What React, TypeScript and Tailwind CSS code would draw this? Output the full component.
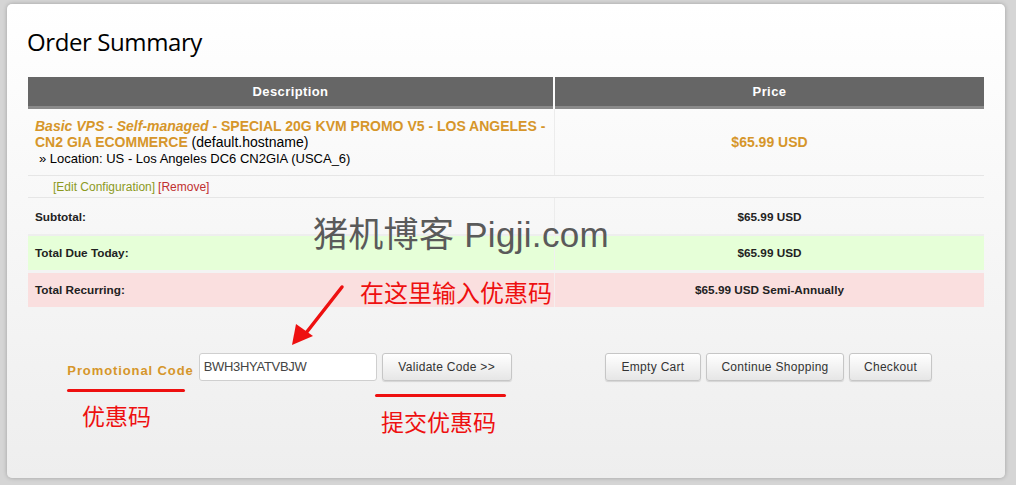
import React from "react";

const sans = { fontFamily: '"Liberation Sans", Arial, sans-serif' };
const cjk = { fontFamily: '"Noto Sans CJK SC", "Liberation Sans", sans-serif' };
const mark = { fontFamily: '"Liberation Sans", "Noto Sans CJK SC", sans-serif' };

function Btn({ label, w }: { label: string; w: string }) {
  return (
    <button
      className={`h-[28px] ${w} rounded-[3px] border border-[#c6c6c6] bg-gradient-to-b from-white to-[#e6e6e6] text-[12px] text-[#333] tracking-[0.3px] shadow-[0_1px_1px_rgba(0,0,0,0.12)]`}
      style={sans}
    >
      {label}
    </button>
  );
}

export default function App() {
  return (
    <div className="w-[1016px] h-[485px] bg-[#d5d5d5] pt-[4px] pl-[7px] overflow-hidden" style={sans}>
      <div className="relative w-[998px] h-[474px] rounded-[5px] bg-gradient-to-b from-white to-[#eeeeee] shadow-[0_0_4px_rgba(0,0,0,0.25)] px-[21px] pt-[20px]">
        <h1
          className="text-[24px] leading-[36px] text-black ml-[-1px] tracking-[-0.4px]"
          style={{ fontFamily: '"Open Sans", "Noto Sans", sans-serif' }}
        >
          Order Summary
        </h1>

        <div className="mt-[17px] w-[956px]">
          {/* header */}
          <div className="flex gap-[2px] text-[13px] font-bold text-white">
            <div className="w-[525px] h-[32px] bg-[#666] border-b-[3px] border-[#8a8a8a] flex items-center justify-center tracking-[0.4px]">
              Description
            </div>
            <div className="flex-1 h-[32px] bg-[#666] border-b-[3px] border-[#8a8a8a] flex items-center justify-center tracking-[0.4px]">
              Price
            </div>
          </div>

          {/* product */}
          <div className="flex border-b border-[#e6e6e6]">
            <div className="w-[527px] h-[66px] pl-[7px] pt-[10px] text-[14px] leading-[15.5px] text-black border-r border-[#ececec]">
              <div className="text-[#d6962a] font-bold">
                <i>Basic VPS - Self-managed</i> - SPECIAL 20G KVM PROMO V5 - LOS ANGELES -
              </div>
              <div>
                <span className="text-[#d6962a] font-bold">CN2 GIA ECOMMERCE</span> (default.hostname)
              </div>
              <div className="pl-[4px] pt-[1px] text-[13px]">» Location: US - Los Angeles DC6 CN2GIA (USCA_6)</div>
            </div>
            <div className="flex-1 flex items-center justify-center text-[14px] font-bold text-[#d6962a]">
              $65.99 USD
            </div>
          </div>

          {/* edit */}
          <div className="h-[22px] pl-[25px] flex items-center text-[12px] border-b border-[#e6e6e6]">
            <span className="text-[#8c9a1e]">[Edit Configuration]</span>
            <span className="text-[#c03030] ml-[3px]">[Remove]</span>
          </div>

          {/* totals */}
          <div className="flex h-[38px] border-b-2 border-[#eeeeee] text-[11.75px] font-bold text-[#222]">
            <div className="w-[527px] pl-[7px] pt-[1px] flex items-center border-r border-[#ececec]">Subtotal:</div>
            <div className="flex-1 pt-[1px] flex items-center justify-center">$65.99 USD</div>
          </div>
          <div className="flex h-[37px] bg-[#e6ffd8] border-b-[3px] border-[#f3f3f3] text-[11.75px] font-bold text-[#222]">
            <div className="w-[527px] pl-[7px] flex items-center border-r border-[#f0f0f0]">Total Due Today:</div>
            <div className="flex-1 flex items-center justify-center">$65.99 USD</div>
          </div>
          <div className="flex h-[34px] bg-[#fadfdf] text-[11.75px] font-bold text-[#222]">
            <div className="w-[527px] pl-[7px] flex items-center border-r border-[#f6eeee]">Total Recurring:</div>
            <div className="flex-1 flex items-center justify-center">$65.99 USD Semi-Annually</div>
          </div>
        </div>

        {/* promo + actions */}
        <div className="mt-[46px] w-[956px] flex">
          <div className="w-[525px] flex items-center justify-center gap-[5px] pr-[2px]">
            <span className="text-[13px] font-bold text-[#d6962a] tracking-[0.9px] mt-[8px]">Promotional Code</span>
            <div className="w-[178px] h-[28px] bg-white border border-[#cfcfcf] rounded-[3px] flex items-center pl-[4px] text-[13px] text-[#444] tracking-[-0.3px]">
              BWH3HYATVBJW
            </div>
            <Btn label="Validate Code >>" w="w-[130px]" />
          </div>
          <div className="flex-1 flex items-center justify-center gap-[5px]">
            <Btn label="Empty Cart" w="w-[96px]" />
            <Btn label="Continue Shopping" w="w-[138px]" />
            <Btn label="Checkout" w="w-[83px]" />
          </div>
        </div>

        {/* annotations */}
        <div
          className="absolute left-[306px] top-[209px] text-[35px] leading-[44px] tracking-[0.3px] text-[#5a5a5a] whitespace-nowrap"
          style={mark}
        >
          猪机博客 Pigji.com
        </div>
        <div className="absolute left-[353px] top-[272px] text-[24px] leading-[32px] text-[#ee1010] whitespace-nowrap" style={cjk}>
          在这里输入优惠码
        </div>
        <svg className="absolute left-[277px] top-[277px]" width="64" height="70" viewBox="0 0 64 70">
          <line x1="58" y1="6" x2="22" y2="52" stroke="#ee1010" strokeWidth="3.5" strokeLinecap="round" />
          <polygon points="8,64 12,43 29,55" fill="#ee1010" />
        </svg>
        <div className="absolute left-[60px] top-[385px] w-[118px] h-[3px] bg-[#ee1010] rounded-full" />
        <div className="absolute left-[75px] top-[396px] text-[23px] leading-[30px] text-[#ee1010] whitespace-nowrap" style={cjk}>
          优惠码
        </div>
        <div className="absolute left-[368px] top-[390px] w-[131px] h-[3px] bg-[#ee1010] rounded-full" />
        <div className="absolute left-[374px] top-[401px] text-[23px] leading-[32px] text-[#ee1010] whitespace-nowrap" style={cjk}>
          提交优惠码
        </div>
      </div>
    </div>
  );
}
